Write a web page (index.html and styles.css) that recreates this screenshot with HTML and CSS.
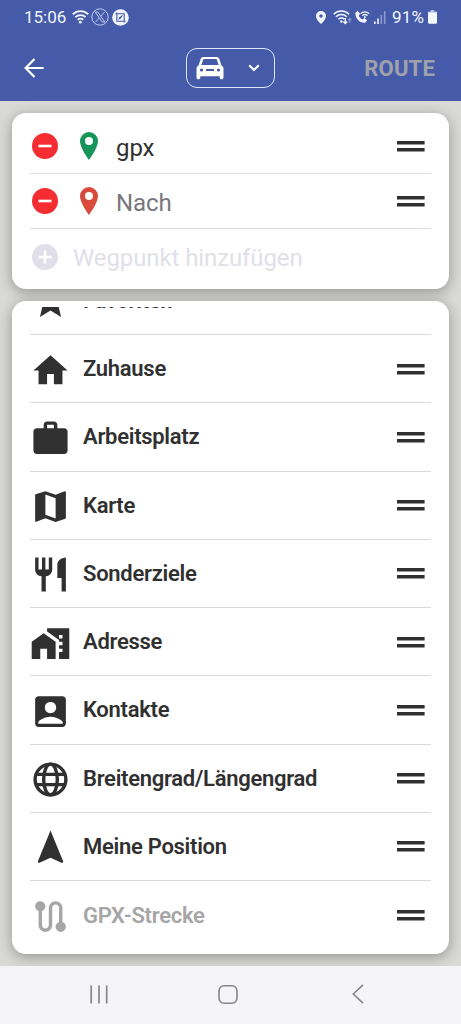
FILE: index.html
```html
<!DOCTYPE html>
<html lang="de">
<head>
<meta charset="utf-8">
<title>Route</title>
<link rel="stylesheet" href="styles.css">
</head>
<body>
<svg class="defs" width="0" height="0">
  <symbol id="grip" viewBox="0 0 28 11"><path d="M0 0h27.600v3.600H0zM0 7h27.600v3.600H0z" fill="#303030"/></symbol>
  <symbol id="minus" viewBox="0 0 26 26"><circle cx="13" cy="13" r="13" fill="#f52c31"/><path d="M6.500 13h13" stroke="#fff" stroke-width="2.600"/></symbol>
  <symbol id="pin" viewBox="0 0 18 28"><path fill-rule="evenodd" d="M9 0a9 9 0 0 0-9 9c0 7 9 19 9 19s9-12 9-19a9 9 0 0 0-9-9zm0 5a4 4 0 1 1 0 8 4 4 0 0 1 0-8z"/></symbol>
</svg>
<div class="screen">
  <header class="header">
    <div class="status">
      <span class="time">15:06</span>
      <svg class="s-wifi" width="17" height="14" viewBox="0 0 17 14" fill="none" stroke="#f2f5ff" stroke-width="1.900"><path d="M.8 4.300a11 11 0 0 1 15.400 0M3.400 7.200a7.200 7.200 0 0 1 10.200 0M5.800 9.800a3.800 3.800 0 0 1 5.400 0"/><circle cx="8.300" cy="12.200" r="1.400" fill="#f2f5ff" stroke="none"/></svg>
      <svg class="s-x" width="18" height="18" viewBox="0 0 18 18" fill="none" stroke="#ccd5f7" stroke-width=".9"><circle cx="9" cy="9" r="8.200"/><path d="M4.200 4h2.600l7 10h-2.600zM13.400 4 9.800 8.200M8.200 10 4.600 14"/></svg>
      <svg class="s-app" width="17" height="17" viewBox="0 0 17 17"><circle cx="8.500" cy="8.500" r="8.300" fill="#f2f5ff"/><g fill="none" stroke="#455ba9" stroke-width="1.100"><path d="M4.800 3.500v8.700h8.700M3.500 4.800h8.700v8.700"/></g><path d="m6.200 10.800.8-2.400 3.400-2.500.5.6-2.300 3.300z" fill="#455ba9"/></svg>
      <span class="gap"></span>
      <svg class="s-loc" width="10" height="13" viewBox="0 0 10 13"><path fill="#f2f5ff" fill-rule="evenodd" d="M5 0a5 5 0 0 0-5 5c0 3.700 5 8 5 8s5-4.300 5-8a5 5 0 0 0-5-5zm0 3.200a1.800 1.800 0 1 1 0 3.600 1.800 1.800 0 0 1 0-3.600z"/></svg>
      <svg class="s-wifi2" width="19" height="15" viewBox="0 0 19 15" fill="none" stroke="#f2f5ff" stroke-width="1.500"><path d="M.7 4.200a11 11 0 0 1 15.400 0M3 6.800a7.600 7.600 0 0 1 10.800 0M5.400 9.300a4.200 4.200 0 0 1 6 0"/><circle cx="8.300" cy="11.500" r="1.200" fill="#f2f5ff" stroke="none"/><path d="M12.300 8v5.500m-2-2 2 2 2-2" stroke-width="1.400"/><path d="M16.800 13V8.500m-1.600 1.600 1.600-1.600 1.600 1.600" stroke="#8b9ad0" stroke-width="1.200"/></svg>
      <svg class="s-call" width="15" height="14" viewBox="0 0 15 14"><path fill="#f2f5ff" d="M.6 2.500 2.500.8l2.600 3-1.400 1.900c.8 1.900 2 3 3.700 3.700l1.900-1.500 2.900 2.300-1.700 2.300C5.500 13.800-.6 8.300.6 2.500z"/><path d="M5.600 3.600a6 6 0 0 1 8.600 0M7.300 5.600a3.600 3.600 0 0 1 5.200 0" fill="none" stroke="#f2f5ff" stroke-width="1.300"/><circle cx="9.900" cy="7" r="1" fill="#f2f5ff"/></svg>
      <svg class="s-sig" width="12" height="13" viewBox="0 0 12 13"><path fill="#f2f5ff" d="M0 10.500h1.600V13H0zM3.200 7.500h1.600V13H3.200z"/><path fill="#8b9ad0" d="M6.500 4h1.600v9H6.500zM9.900 0h1.600v13H9.900z"/></svg>
      <span class="pct">91%</span>
      <svg class="s-bat" width="9" height="14" viewBox="0 0 9 14"><path fill="#b5c0e6" d="M2.800 0h3.400v1.500H9V4H0V1.500h2.800z"/><rect y="2.600" width="9" height="11.200" rx="1.300" fill="#f5f7ff"/></svg>
    </div>
    <div class="toolbar">
      <div class="side"><svg width="20" height="20" viewBox="0 0 20 20" fill="none" stroke="#fff" stroke-width="2.200"><path d="M19.600 10H1.800M10.500 1 1.600 10l8.900 9"/></svg></div>
      <div class="mode">
        <svg width="28" height="23" viewBox="0 0 28 23"><path fill="#fff" fill-rule="evenodd" d="M4.600 2.300C5 .8 6.100 0 7.600 0h12.800c1.500 0 2.600.8 3 2.300l2.100 6.200c1.300.7 2 1.800 2 3.300v8.700c0 1.100-.7 1.800-1.900 1.800s-1.900-.7-1.900-1.800v-1.300H4.300v1.300c0 1.100-.7 1.800-1.900 1.800S.5 21.600.5 20.500v-8.700c0-1.500.7-2.600 2-3.300zM7 2.900 5.300 8.100h17.400L21 2.900c-.2-.6-.5-.8-1-.8H8c-.5 0-.8.2-1 .8zM5.500 11.400a1.600 1.600 0 1 0 0 3.200 1.600 1.600 0 0 0 0-3.200zm17 0a1.600 1.600 0 1 0 0 3.200 1.600 1.600 0 0 0 0-3.200zM10 12v2h8v-2z"/></svg>
        <svg width="12" height="8" viewBox="0 0 12 8" fill="none" stroke="#fff" stroke-width="2"><path d="m1.200 1.200 4.800 4.800 4.800-4.800"/></svg>
      </div>
      <div class="side right">ROUTE</div>
    </div>
  </header>
  <main class="main">
    <section class="card stops">
      <div class="stop"><svg class="round"><use href="#minus"/></svg><svg class="pin green"><use href="#pin"/></svg><span class="name">gpx</span><svg class="grip"><use href="#grip"/></svg></div>
      <div class="stop"><svg class="round"><use href="#minus"/></svg><svg class="pin red"><use href="#pin"/></svg><span class="name hint">Nach</span><svg class="grip"><use href="#grip"/></svg></div>
      <div class="stop add"><svg class="round" viewBox="0 0 26 26"><circle cx="13" cy="13" r="13" fill="#e1e0ea"/><path d="M6.500 13h13M13 6.500v13" stroke="#fff" stroke-width="2.500"/></svg><span class="name">Wegpunkt hinzufügen</span></div>
    </section>
    <section class="card sources">
      <div class="scroller">
        <ul class="list">
          <li><svg class="icon" viewBox="0 0 24 24"><path d="M12 17.270 18.180 21l-1.640-7.030L22 9.240l-7.190-.61L12 2 9.190 8.630 2 9.240l5.460 4.730L5.820 21z"/></svg><span>Favoriten</span></li>
          <li><svg class="icon" viewBox="0 0 24 24"><path d="M10 20v-6h4v6h5v-8h3L12 3 2 12h3v8z"/></svg><span>Zuhause</span><svg class="grip"><use href="#grip"/></svg></li>
          <li><svg class="icon" viewBox="0 0 24 24"><path fill-rule="evenodd" d="M20 6h-4V4c0-1.110-.89-2-2-2h-4c-1.110 0-2 .89-2 2v2H4c-1.110 0-2 .89-2 2v11c0 1.110.89 2 2 2h16c1.110 0 2-.89 2-2V8c0-1.110-.89-2-2-2zm-6 0h-4V4h4v2z"/></svg><span>Arbeitsplatz</span><svg class="grip"><use href="#grip"/></svg></li>
          <li><svg class="icon" viewBox="0 0 24 24"><path fill-rule="evenodd" d="M20.500 3l-.16.030L15 5.100 9 3 3.360 4.900c-.21.070-.36.250-.36.480V20.500c0 .280.220.5.5.5l.16-.030L9 18.900l6 2.100 5.640-1.900c.21-.070.36-.250.36-.480V3.500c0-.280-.220-.5-.5-.5zM15 19l-6-2.110V5l6 2.110V19z"/></svg><span>Karte</span><svg class="grip"><use href="#grip"/></svg></li>
          <li><svg class="icon" viewBox="0 0 24 24"><path d="M11 9H9V2H7v7H5V2H3v7c0 2.120 1.660 3.840 3.750 3.970V22h2.500v-9.030C11.340 12.840 13 11.120 13 9V2h-2v7zm5-3v8h2.500v8H21V2c-2.760 0-5 2.240-5 4z"/></svg><span>Sonderziele</span><svg class="grip"><use href="#grip"/></svg></li>
          <li><svg class="icon" viewBox="0 0 24 24"><path d="M1 11v10h5v-6h4v6h5V11L8 6z"/><path fill-rule="evenodd" d="M10 3v1.970l7 5V11h2v2h-2v2h2v2h-2v4h6V3H10zm9 6h-2V7h2v2z"/></svg><span>Adresse</span><svg class="grip"><use href="#grip"/></svg></li>
          <li><svg class="icon" viewBox="0 0 24 24"><path fill-rule="evenodd" d="M19 3H5c-1.110 0-2 .9-2 2v14c0 1.100.89 2 2 2h14c1.100 0 2-.9 2-2V5c0-1.100-.9-2-2-2zm-7 3.500c1.930 0 3.300 1.300 3.300 3.200S13.930 13 12 13s-3.300-1.400-3.300-3.300S10.070 6.500 12 6.500zm7.200 12.700H4.800v-.4c0-.620.280-1.200.760-1.580C7.470 15.820 9.640 15 12 15s4.530.820 6.440 2.220c.480.380.760.960.760 1.580z"/></svg><span>Kontakte</span><svg class="grip"><use href="#grip"/></svg></li>
          <li><svg class="icon line" viewBox="0 0 24 24"><circle cx="12" cy="12" r="9"/><ellipse cx="12" cy="12" rx="4" ry="9"/><path d="M3.500 9h17M3.500 15h17"/></svg><span>Breitengrad/Längengrad</span><svg class="grip"><use href="#grip"/></svg></li>
          <li><svg class="icon" viewBox="0 0 24 24"><path d="M12 2 4.500 20.290l.71.710L12 18l6.790 3 .71-.710z"/></svg><span>Meine Position</span><svg class="grip"><use href="#grip"/></svg></li>
          <li class="off"><svg class="icon" viewBox="0 0 24 24"><path d="M19 15.180V7c0-2.210-1.790-4-4-4s-4 1.790-4 4v10c0 1.100-.9 2-2 2s-2-.9-2-2V8.820C8.160 8.400 9 7.300 9 6c0-1.660-1.340-3-3-3S3 4.340 3 6c0 1.300.84 2.400 2 2.820V17c0 2.210 1.790 4 4 4s4-1.790 4-4V7c0-1.100.9-2 2-2s2 .9 2 2v8.180c-1.160.410-2 1.510-2 2.820 0 1.660 1.340 3 3 3s3-1.340 3-3c0-1.310-.84-2.410-2-2.820z"/></svg><span>GPX-Strecke</span><svg class="grip"><use href="#grip"/></svg></li>
        </ul>
      </div>
    </section>
  </main>
  <nav class="nav">
    <svg width="18" height="19" viewBox="0 0 18 19" stroke="#85868a" stroke-width="1.700"><path d="M1.200.5v18M9 .5v18M16.700.5v18"/></svg>
    <svg class="home" width="20" height="19" viewBox="0 0 20 19" fill="none" stroke="#85868a" stroke-width="1.600"><rect x="1" y=".8" width="18" height="17.400" rx="5"/></svg>
    <svg class="back" width="12" height="20" viewBox="0 0 12 20" fill="none" stroke="#85868a" stroke-width="1.600"><path d="M11 .8 1.300 10l9.700 9.200"/></svg>
  </nav>
</div>
</body>
</html>
```
FILE: styles.css
```css
* { box-sizing: border-box; }
body { margin: 0; font-family: Roboto, "Noto Sans", sans-serif; }
svg { display: block; flex: none; }
.defs { position: absolute; }
.screen { width: 461px; height: 1024px; display: flex; flex-direction: column; overflow: hidden; background: #d9d9d7; }

.header { height: 101px; flex: none; background: #455ba9; color: #f2f5ff; }
.status { height: 34px; display: flex; align-items: center; padding-left: 24px; padding-right: 24px; font-size: 17px; line-height: 20px; }
.time { width: 48px; }
.s-x { margin-left: 2px; }
.s-app { margin-left: 3px; }
.gap { flex: 1; }
.s-wifi2 { margin-left: 7px; }
.s-call { margin-left: 3px; }
.s-sig { margin-left: 4px; }
.pct { margin-left: 6px; width: 34px; letter-spacing: .2px; }
.s-bat { margin-left: 2px; }

.toolbar { display: flex; align-items: center; height: 68px; padding: 0 26px 0 24px; }
.side { flex: 1; }
.right { padding-top: 1px; text-align: right; font-size: 22px; font-weight: 700; letter-spacing: .2px; color: #9fa2ab; }
.mode { width: 89px; height: 40px; margin-left: 2px; display: flex; align-items: center; justify-content: space-between; padding: 0 14px 0 9px; border: 1.500px solid #dfe6fb; border-radius: 11px; }

.main { flex: 1; min-height: 0; display: flex; flex-direction: column; gap: 12px; padding: 12px; overflow: hidden; }
.card { background: #fff; border-radius: 14px; box-shadow: 0 3px 14px rgba(0, 0, 0, .32); }
.stops { height: 176px; flex: none; padding: 6px 18px 0; }
.stop { height: 55px; display: flex; align-items: center; padding: 0 6px 0 2px; border-bottom: 1px solid #dcdbe4; }
.stop.add { border-bottom: 0; }
.round { width: 26px; height: 26px; }
.pin { width: 18px; height: 28px; margin-left: 22px; }
.green { fill: #16945a; }
.red { fill: #d94b3d; }
.name { flex: 1; margin-left: 18px; padding-top: 3px; font-size: 24px; line-height: 30px; letter-spacing: -.1px; color: #303030; }
.hint { color: #77777c; }
.add .name { margin-left: 15px; padding-top: 2px; color: #e1e0ea; }
.grip { width: 28px; height: 11px; }

.sources { flex: 1; min-height: 0; padding: 6px 18px 5px; }
.scroller { height: 100%; overflow: hidden; }
.list { list-style: none; margin: -40.25px 0 0; padding: 0; }
.list li { height: 68.25px; display: flex; align-items: center; padding: 1px 6px 0 0; border-bottom: 1px solid #dadada; font-size: 22px; font-weight: 600; letter-spacing: -.28px; color: #303030; }
.list li:last-child { border-bottom: 0; }
.list span { flex: 1; margin-left: 12px; padding-bottom: .8px; }
.list li:first-child span { padding-bottom: 1.600px; }
.icon { width: 41px; height: 41px; margin-top: 2px; fill: #303030; }
.line { fill: none; stroke: #303030; stroke-width: 2; }
.off span { color: #a6a6a6; }
.off .icon { fill: #a6a6a6; }

.nav { height: 58px; flex: none; display: flex; align-items: center; padding: 0 0 2px 90px; background: #f5f5f8; }
.home { margin-left: 110px; }
.back { margin-left: 114px; }
```
